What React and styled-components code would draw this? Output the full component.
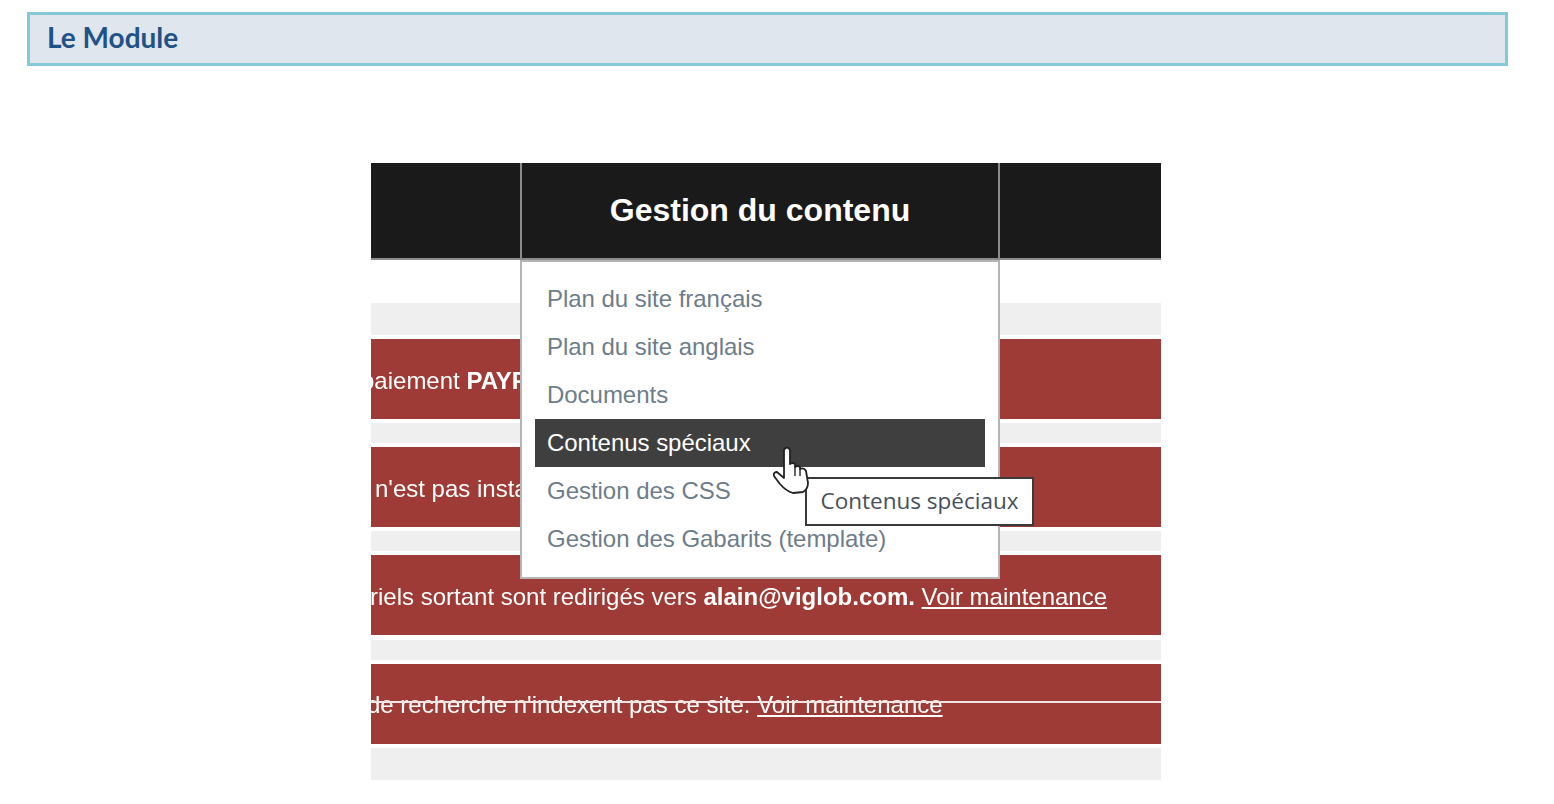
import React from 'react';
import styled, { createGlobalStyle } from 'styled-components';

const GlobalStyle = createGlobalStyle`
  html, body {
    margin: 0;
    padding: 0;
    background: #fff;
  }
`;

const Page = styled.div`
  width: 1554px;
  height: 804px;
  overflow: hidden;
  padding: 12px 0 0 27px;
  box-sizing: border-box;
`;

const Banner = styled.div`
  width: 1481px;
  height: 54px;
  box-sizing: border-box;
  border: 3px solid #85c9d9;
  background: #dfe6ee;
  padding-left: 17px;
  font: 700 28px/44px Lato, "Open Sans", sans-serif;
  color: #1f5287;
`;

const Shot = styled.div`
  position: relative;
  width: 790px;
  margin: 97px 0 0 344px;
  font-family: "Liberation Sans", Arial, sans-serif;
  filter: blur(0.5px);
`;

const TopBar = styled.div`
  height: 97px;
  box-sizing: border-box;
  background: #1a1a1a;
  border-bottom: 2px solid #8c8c8c;
  padding-left: 149px;
`;

const TopCell = styled.div`
  width: 480px;
  height: 100%;
  box-sizing: border-box;
  border-left: 2px solid #8c8c8c;
  border-right: 2px solid #8c8c8c;
  color: #fff;
  font-size: 32px;
  font-weight: 700;
  line-height: 94px;
  text-align: center;
`;

const Rows = styled.div`
  display: flex;
  flex-direction: column;
  padding-top: 43px;
`;

const GrayRow = styled.div`
  height: ${(p) => p.$h}px;
  margin-bottom: 4px;
  background: #efefef;
`;

const RedRow = styled.div`
  position: relative;
  height: 80px;
  margin-bottom: ${(p) => p.$gap || 4}px;
  padding-top: ${(p) => p.$top}px;
  box-sizing: border-box;
  overflow: hidden;
  background: #9e3b36;
  color: #fff;
  font-size: 24px;
  line-height: 26px;
  white-space: nowrap;
`;

const RowText = styled.div`
  margin-left: ${(p) => p.$left}px;
`;

const Maintenance = styled.a`
  color: #fff;
  text-decoration: underline;
`;

const StrikeLine = styled.div`
  position: absolute;
  left: 0;
  right: 0;
  top: 37px;
  height: 2px;
  background: #f1e4e3;
`;

const Menu = styled.div`
  position: absolute;
  left: 149px;
  top: 97px;
  width: 480px;
  height: 319px;
  box-sizing: border-box;
  padding: 13px 13px 0;
  background: #fff;
  border: 2px solid #b5b5b5;
`;

const MenuItem = styled.div`
  height: 48px;
  padding-left: 12px;
  font-size: 24px;
  line-height: 48px;
  letter-spacing: -0.03px;
  color: ${(p) => (p.$active ? '#fff' : '#6e7d8a')};
  background: ${(p) => (p.$active ? '#3f3f3f' : 'transparent')};
`;

const Tooltip = styled.div`
  position: absolute;
  left: 434px;
  top: 314px;
  width: 229px;
  height: 49px;
  box-sizing: border-box;
  border: 2px solid #3a3a3a;
  background: #fff;
  color: #46505a;
  font-family: "Open Sans", sans-serif;
  font-size: 22.5px;
  line-height: 44px;
  text-align: center;
  white-space: nowrap;
`;

const Cursor = styled.svg`
  position: absolute;
  left: 400px;
  top: 282px;
  width: 40px;
  height: 50px;
`;

function App() {
  return (
    <>
      <GlobalStyle />
      <Page>
        <Banner>Le Module</Banner>
        <Shot>
          <TopBar>
            <TopCell>Gestion du contenu</TopCell>
          </TopBar>
          <Rows>
            <GrayRow $h={32} />
            <RedRow $top={29}>
              <RowText $left={-10}>
                paiement <b>PAYPAL</b>
              </RowText>
            </RedRow>
            <GrayRow $h={20} />
            <RedRow $top={29}>
              <RowText $left={4}>n'est pas installé</RowText>
            </RedRow>
            <GrayRow $h={20} />
            <RedRow $top={29} $gap={5}>
              <RowText $left={-1}>
                riels sortant sont redirigés vers <b>alain@viglob.com.</b>{' '}
                <Maintenance>Voir maintenance</Maintenance>
              </RowText>
            </RedRow>
            <GrayRow $h={20} />
            <RedRow $top={28}>
              <RowText $left={-4}>
                de recherche n'indexent pas ce site.{' '}
                <Maintenance>Voir maintenance</Maintenance>
              </RowText>
              <StrikeLine />
            </RedRow>
            <GrayRow $h={32} />
          </Rows>
          <Menu>
            <MenuItem>Plan du site français</MenuItem>
            <MenuItem>Plan du site anglais</MenuItem>
            <MenuItem>Documents</MenuItem>
            <MenuItem $active>Contenus spéciaux</MenuItem>
            <MenuItem>Gestion des CSS</MenuItem>
            <MenuItem>Gestion des Gabarits (template)</MenuItem>
          </Menu>
          <Tooltip>Contenus spéciaux</Tooltip>
          <Cursor viewBox="0 0 40 50">
            <path
              d="M13 5 Q16 0 19 5 L19 19 Q21.5 17 24 19 L24 22 Q26.5 20 29 22 L29 24 Q33 22 35 26 L37 38 Q37 44 32 47 L22 48 Q15 46 9 39 L3 31 Q2 27 6 27 L13 33 Z"
              fill="#fff"
              stroke="#222"
              strokeWidth="1.8"
              strokeLinejoin="round"
            />
            <path d="M24 22 L24 31 M29 24 L29 31" fill="none" stroke="#222" strokeWidth="1.4" />
          </Cursor>
        </Shot>
      </Page>
    </>
  );
}

export default App;
